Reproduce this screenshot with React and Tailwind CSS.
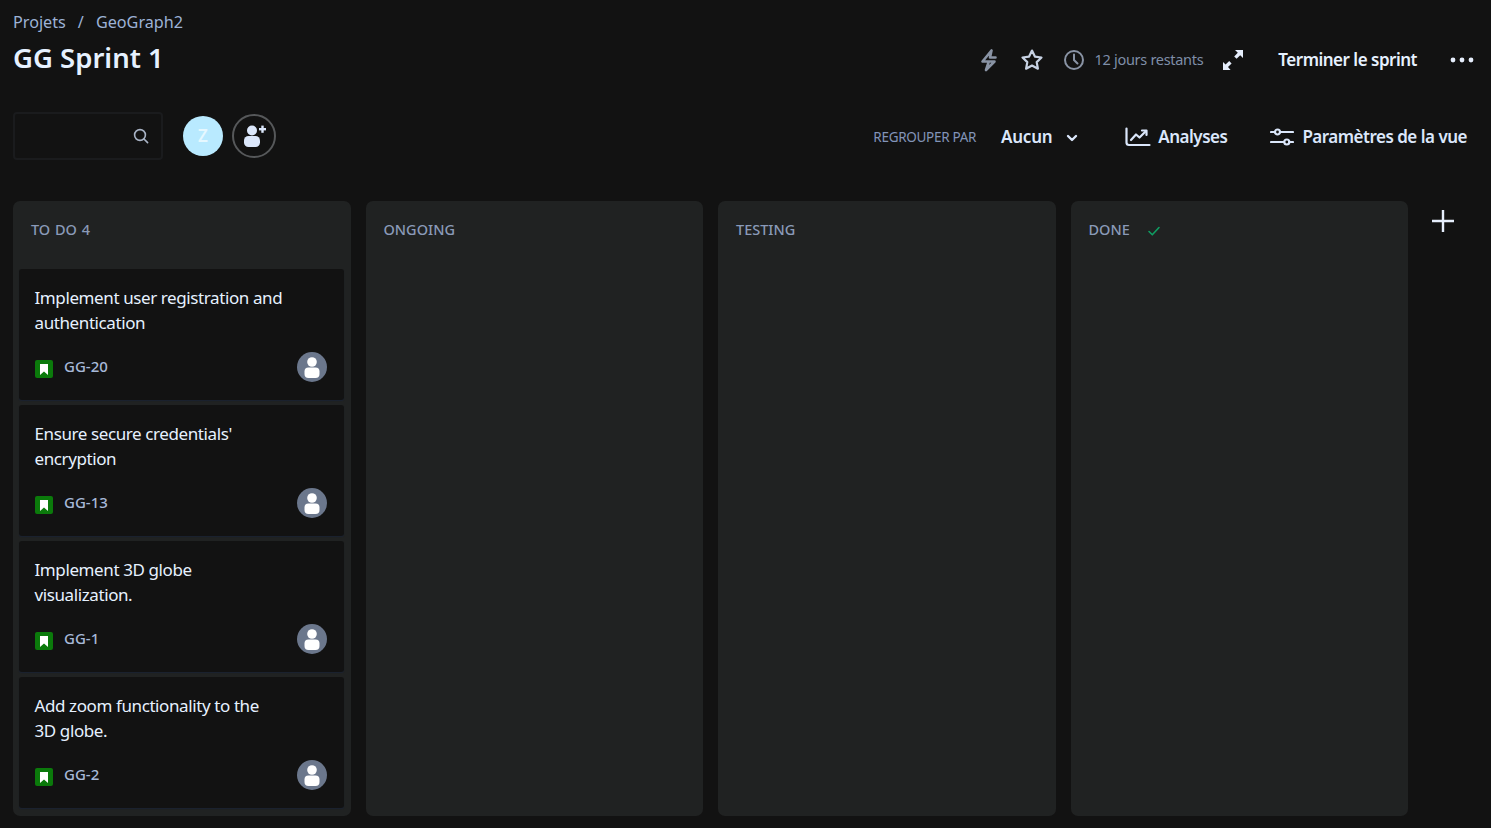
import React from "react";

function Bolt() {
  return (
    <svg width="20" height="24" viewBox="0 0 20 24" fill="none" stroke="#8993a4" strokeWidth="2.6" strokeLinejoin="round" strokeLinecap="round">
      <path d="M12.5 2.5 L3.5 13.5 H15.5 L7 22 L9.5 14.5 M12.5 2.5 L11 9.5 H16.5" />
    </svg>
  );
}
function Star() {
  return (
    <svg width="24" height="24" viewBox="0 0 24 24" fill="none" stroke="#c7d2e3" strokeWidth="2.2" strokeLinejoin="round">
      <path d="M12 2.6 l2.9 6 6.6.9-4.8 4.6 1.2 6.6-5.9-3.2-5.9 3.2 1.2-6.6-4.8-4.6 6.6-.9z" />
    </svg>
  );
}
function Clock() {
  return (
    <svg width="22" height="22" viewBox="0 0 22 22" fill="none" stroke="#8993a4" strokeWidth="2" strokeLinecap="round">
      <circle cx="11" cy="11" r="9" />
      <path d="M11 5.5 V11 L14.5 14.5" />
    </svg>
  );
}
function Expand() {
  return (
    <svg width="22" height="22" viewBox="0 0 22 22" fill="#e6eefc">
      <path d="M13 1 H21 V9 L18.2 6.2 L14.6 9.8 L12.2 7.4 L15.8 3.8 Z" />
      <path d="M1 21 V13 L3.6 15.6 L7.2 12 L9.6 14.4 L6 18 L8.6 21 Z" />
    </svg>
  );
}
function Dots() {
  return (
    <svg width="24" height="6" viewBox="0 0 24 6" fill="#e6eefc">
      <circle cx="3" cy="3" r="2.4" />
      <circle cx="12" cy="3" r="2.4" />
      <circle cx="21" cy="3" r="2.4" />
    </svg>
  );
}
function Search() {
  return (
    <svg width="16" height="16" viewBox="0 0 16 16" fill="none" stroke="#a9b4c6" strokeWidth="1.6" strokeLinecap="round">
      <circle cx="7" cy="7" r="5.4" />
      <path d="M11 11 L14.6 14.6" />
    </svg>
  );
}
function AddUser() {
  return (
    <svg width="24" height="24" viewBox="0 0 24 24" fill="#dbe7fb">
      <circle cx="10" cy="6.5" r="5" />
      <rect x="2" y="12" width="16" height="11" rx="4.5" />
      <rect x="17" y="4" width="7" height="2.4" />
      <rect x="19.3" y="1.6" width="2.4" height="7.2" />
    </svg>
  );
}
function Chevron() {
  return (
    <svg width="12" height="8" viewBox="0 0 12 8" fill="none" stroke="#dbe7fb" strokeWidth="2.4" strokeLinecap="round" strokeLinejoin="round">
      <path d="M2 2 L6 6 L10 2" />
    </svg>
  );
}
function Chart() {
  return (
    <svg width="26" height="20" viewBox="0 0 26 20" fill="none" stroke="#dbe7fb" strokeWidth="2.2" strokeLinecap="round" strokeLinejoin="round">
      <path d="M1.5 1.5 V15.5 Q1.5 18 4 18 H24.5" />
      <path d="M6 13 L11 7.5 L14.5 10.5 L21 4" />
      <path d="M17 3.5 H21.5 V8" />
    </svg>
  );
}
function Sliders() {
  return (
    <svg width="24" height="18" viewBox="0 0 24 18" fill="none" stroke="#dbe7fb" strokeWidth="2.2" strokeLinecap="round">
      <path d="M1 4 H5 M10.5 4 H23" />
      <circle cx="7.5" cy="4" r="2.5" />
      <path d="M1 14 H14 M19.5 14 H23" />
      <circle cx="16.8" cy="14" r="2.5" />
    </svg>
  );
}
function Plus() {
  return (
    <svg width="24" height="24" viewBox="0 0 24 24" fill="none" stroke="#e6eefc" strokeWidth="2.4">
      <path d="M12 1 V23 M1 12 H23" />
    </svg>
  );
}
function Check() {
  return (
    <svg width="14" height="12" viewBox="0 0 14 12" fill="none" stroke="#0f9d62" strokeWidth="1.6" strokeLinecap="round" strokeLinejoin="round">
      <path d="M2 6.5 L5.3 9.8 L12 2.5" />
    </svg>
  );
}
function StoryIcon() {
  return (
    <span className="flex h-[18px] w-[18px] items-center justify-center rounded-[2px] bg-[#0b7a0b]">
      <svg width="10" height="11" viewBox="0 0 10 11" fill="#ffffff">
        <path d="M1 0 H9 V11 L5 7.6 L1 11 Z" />
      </svg>
    </span>
  );
}
function Avatar() {
  return (
    <span className="flex h-[30px] w-[30px] items-center justify-center rounded-full bg-[#6b778c]">
      <svg width="30" height="30" viewBox="0 0 30 30" fill="#ffffff">
        <circle cx="15" cy="10" r="4.8" />
        <rect x="7.5" y="15.5" width="15" height="10.5" rx="4" />
      </svg>
    </span>
  );
}

const issues = [
  { t: ["Implement user registration and", "authentication"], k: "GG-20" },
  { t: ["Ensure secure credentials'", "encryption"], k: "GG-13" },
  { t: ["Implement 3D globe", "visualization."], k: "GG-1" },
  { t: ["Add zoom functionality to the", "3D globe."], k: "GG-2" },
];

function Card({ t, k }) {
  return (
    <div className="flex h-[131px] flex-col rounded-[3px] bg-[#121212] pl-[15.5px] pr-[17px] pt-[16px] shadow-[0_1px_1px_#1a2230]">
      <div className="text-[17px] leading-[25px] tracking-[-0.4px] text-[#e6f1ff]">
        {t.map((l) => (
          <div key={l}>{l}</div>
        ))}
      </div>
      <div className="mt-[17px] flex items-center justify-between">
        <div className="flex items-center">
          <span className="mt-[4px]"><StoryIcon /></span>
          <span className="mb-[2px] ml-[11.5px] text-[15px] font-medium text-[#a6b8d8]">{k}</span>
        </div>
        <Avatar />
      </div>
    </div>
  );
}

function Column({ title, check, children }) {
  return (
    <div className="flex-1 rounded-[7px] bg-[#202222] pb-[8px] pl-[6px] pr-[7px]">
      <div className="flex h-[58px] items-center pl-[12px] text-[14.5px] font-medium text-[#8a9ab8] [word-spacing:1px]">
        <span>{title}</span>
        {check && <span className="ml-[17px] mt-[2px]"><Check /></span>}
      </div>
      <div className="mt-[10px] flex flex-col gap-[5px]">{children}</div>
    </div>
  );
}

export default function App() {
  return (
    <div className="h-[828px] w-[1491px] overflow-hidden bg-[#121212] pl-[13px] text-[#e6f1ff]" style={{ fontFamily: '"Noto Sans", sans-serif' }}>
      <div className="flex h-[35px] items-end pb-[1px] text-[16.2px] leading-[24px] text-[#9db2d6]">
        <span>Projets</span>
        <span className="mx-[12px]">/</span>
        <span>GeoGraph2</span>
      </div>
      <div className="flex h-[47px] items-center justify-between pr-[17px]">
        <h1 className="-mt-[2px] text-[27.5px] font-semibold leading-[48px] text-[#e6f1ff]">GG Sprint 1</h1>
        <div className="mt-[2px] flex items-center">
          <Bolt />
          <span className="ml-[21px]"><Star /></span>
          <span className="ml-[19px]"><Clock /></span>
          <span className="ml-[10px] text-[14.5px] tracking-[-0.3px] text-[#7f8ea8]">12 jours restants</span>
          <span className="ml-[19px]"><Expand /></span>
          <span className="ml-[34px] text-[17px] font-semibold tracking-[-0.5px] text-[#e6f1ff]">Terminer le sprint</span>
          <span className="ml-[33px]"><Dots /></span>
        </div>
      </div>
      <div className="mt-[30px] flex h-[48px] items-center justify-between pr-[24px]">
        <div className="flex items-center">
          <div className="flex h-[48px] w-[150px] items-center justify-end rounded-[4px] border-2 border-[#1a1b1d] pr-[12px]">
            <Search />
          </div>
          <span className="ml-[20px] flex h-[40px] w-[40px] items-center justify-center rounded-full bg-[#b9eaff] text-[17px] font-semibold text-[#e6f8ff]">Z</span>
          <span className="ml-[9px] flex h-[44px] w-[44px] items-center justify-center rounded-full border-2 border-[#56585a]"><AddUser /></span>
        </div>
        <div className="mt-[2px] flex items-center">
          <span className="text-[13.5px] tracking-[-0.3px] text-[#8294b8]">REGROUPER PAR</span>
          <span className="ml-[25px] text-[17px] font-semibold tracking-[-0.25px] text-[#dbe7fb]">Aucun</span>
          <span className="ml-[14px] mt-[1px]"><Chevron /></span>
          <span className="ml-[47px]"><Chart /></span>
          <span className="ml-[7px] text-[17px] font-semibold tracking-[-0.5px] text-[#dbe7fb]">Analyses</span>
          <span className="ml-[43px]"><Sliders /></span>
          <span className="ml-[8px] text-[17px] font-semibold tracking-[-0.5px] text-[#dbe7fb]">Paramètres de la vue</span>
        </div>
      </div>
      <div className="mt-[41px] flex h-[615px] w-[1395px] gap-[15px]">
        <Column title="TO DO 4">
          {issues.map((i) => (
            <Card key={i.k} {...i} />
          ))}
        </Column>
        <Column title="ONGOING" />
        <Column title="TESTING" />
        <Column title="DONE" check />
      </div>
      <div className="absolute left-[1431px] top-[209px]"><Plus /></div>
    </div>
  );
}
